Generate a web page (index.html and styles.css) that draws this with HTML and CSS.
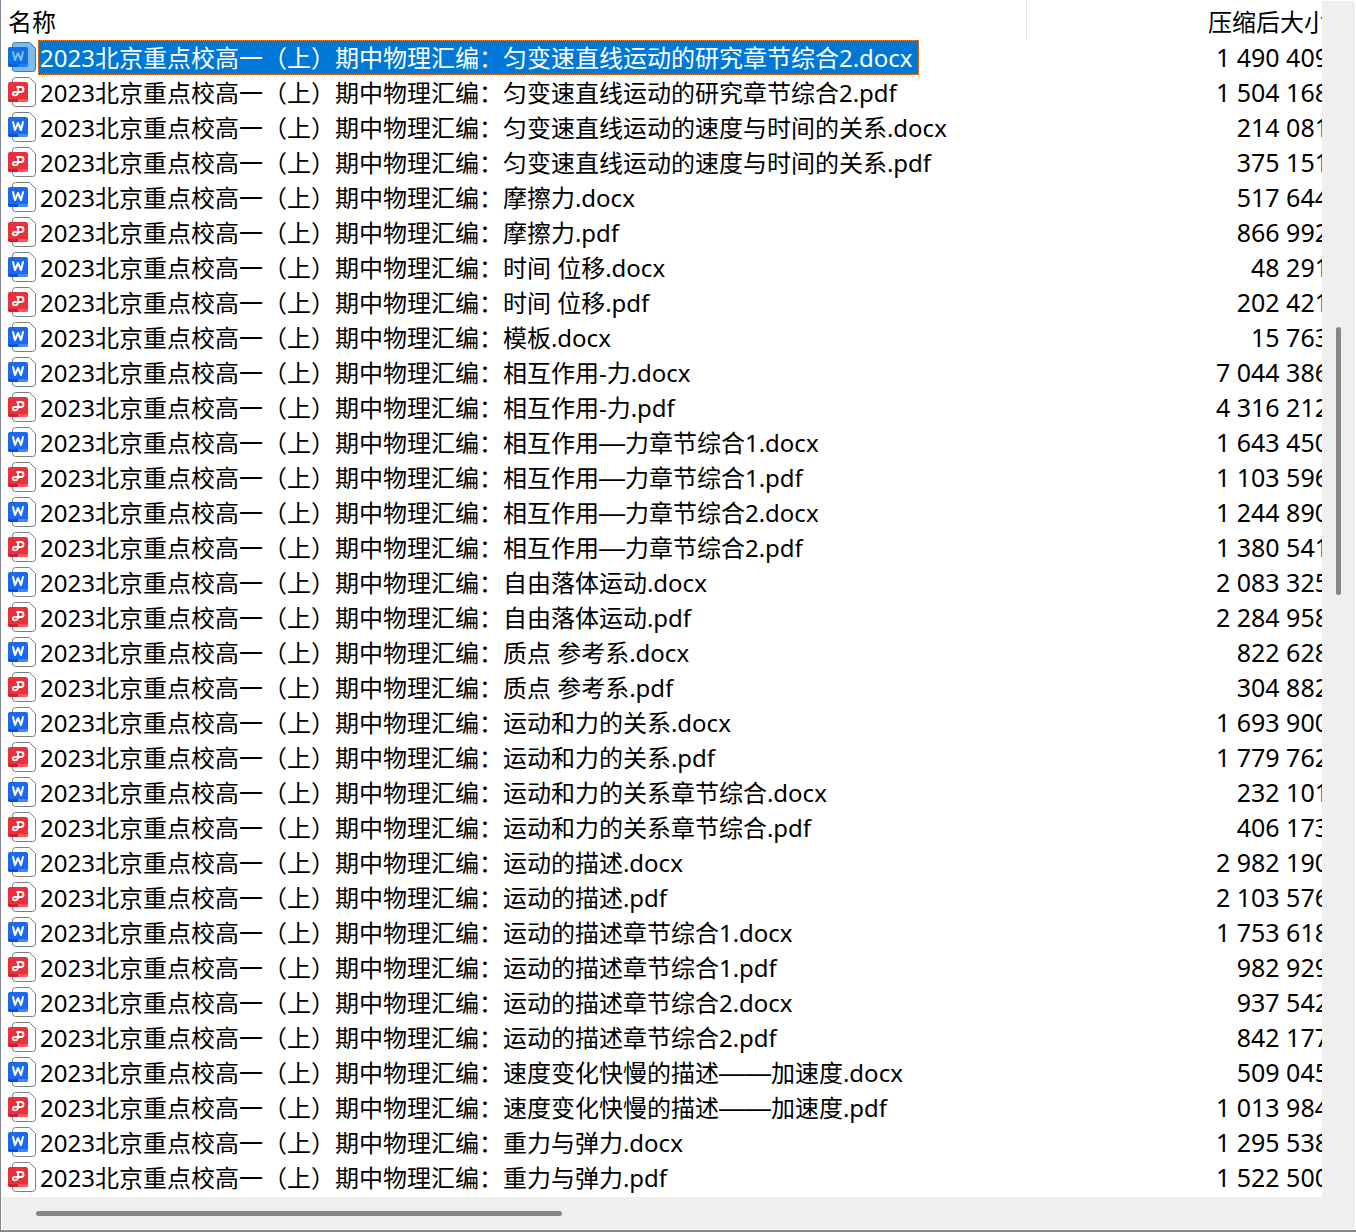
FILE: index.html
```html
<!DOCTYPE html>
<html lang="zh-CN">
<head>
    <meta charset="UTF-8">
    <meta name="viewport" content="width=device-width, initial-scale=1.0">
    <title>名称</title>
    <link rel="stylesheet" href="styles.css">
</head>
<body>
    <svg class="icon-defs" aria-hidden="true">
        <symbol id="icon-docx" viewBox="0 0 28 30">
            <path class="page" d="M4.5 3.5a3 3 0 0 1 3-3h14l6 6v20a3 3 0 0 1-3 3h-17a3 3 0 0 1-3-3z"/>
            <rect x="0" y="5" width="20" height="20" rx="2" fill="#1b69f2"/>
            <path d="M0 22h10v3H2a2 2 0 0 1-2-2z" fill="#0d50d6"/>
            <path d="M10 22h10v1a2 2 0 0 1-2 2h-8z" fill="#4288fb"/>
            <path d="M5 10l2 8 3-7 3 7 2-8" fill="none" stroke="#fff" stroke-width="2" stroke-linejoin="round" stroke-linecap="round"/>
        </symbol>
        <symbol id="icon-pdf" viewBox="0 0 28 30">
            <path class="page" d="M4.5 3.5a3 3 0 0 1 3-3h14l6 6v20a3 3 0 0 1-3 3h-17a3 3 0 0 1-3-3z"/>
            <rect x="0" y="5" width="20" height="20" rx="2" fill="#ec303b"/>
            <path d="M0 22h10v3H2a2 2 0 0 1-2-2z" fill="#cf202e"/>
            <path d="M10 22h10v1a2 2 0 0 1-2 2h-8z" fill="#fb5360"/>
            <path d="M9 10h4a2.5 2.5 0 0 1 0 5H6.500a1.700 1.700 0 1 0 0 3.400q3.500 0 3.500-3.400V10" fill="none" stroke="#fff" stroke-width="1.800" stroke-linecap="round"/>
        </symbol>
    </svg>

    <div class="viewer">
        <div class="list">
            <table class="files">
                <thead>
                    <tr>
                        <th class="col-name" scope="col">名称</th>
                        <th class="col-size" scope="col">压缩后大小</th>
                    </tr>
                </thead>
                <tbody id="fileRows"></tbody>
            </table>
        </div>
        <div class="scrollbar vertical"><div class="thumb"></div></div>
        <div class="scrollbar horizontal"><div class="thumb"></div></div>
    </div>

    <script src="script.js"></script>
</body>
</html>
```
FILE: styles.css
```css
:root {
    --border-color: #828790;
    --bar-color: #efefef;
    --thumb-color: #868686;
    --selected-color: #0078d7;
    --focus-color: #ff8728;
}

* {
    box-sizing: border-box;
    margin: 0;
    padding: 0;
}

body {
    background-color: white;
    color: black;
    font-family: 'Noto Sans', 'Noto Sans CJK SC', sans-serif;
    font-size: 24px;
    line-height: 33px;
}

.icon-defs {
    display: none;
}

.viewer {
    display: grid;
    grid-template-columns: minmax(0, 1fr) 33px;
    grid-template-rows: auto 32px;
    min-height: 100vh;
    border-left: 1px solid var(--border-color);
    border-bottom: 2px solid var(--border-color);
    padding: 0 1px 1px;
}

.list {
    overflow: hidden;
}

/* the table runs on under the vertical scrollbar */
.files {
    width: calc(100% + 11px);
    table-layout: fixed;
    border-collapse: collapse;
    white-space: nowrap;
}

th {
    height: 40px;
    padding-top: 2px;
    font-weight: 400;
}

td {
    height: 35px;
}

.col-name {
    width: 77%;
    padding-left: 6px;
    text-align: left;
    border-right: 1px solid #e5e5e5;
}

.col-size {
    padding-right: 5px;
    text-align: right;
}

.size {
    padding-right: 4px;
    font-size: 25px;
    text-align: right;
}

.file {
    display: flex;
    align-items: flex-start;
    gap: 2px;
    height: 35px;
    padding-left: 6px;
}

.name {
    padding: 0 5px 0 1px;
    border: 1px solid transparent;
}

/* double dashes have to join up */
.dash {
    font-family: 'Liberation Sans', sans-serif;
    font-size: 26px;
    line-height: 1;
}

.icon {
    flex: none;
    width: 28px;
    height: 30px;
    margin-top: 2px;
}

.page {
    fill: white;
    stroke: #7c7c7c;
}

.selected .name {
    color: white;
    background-color: var(--selected-color);
    border: 1px dotted var(--focus-color);
}

.tint {
    fill: var(--selected-color);
    opacity: 0.5;
}

.scrollbar {
    display: flex;
    background-color: var(--bar-color);
}

.scrollbar::before,
.scrollbar::after {
    content: "";
}

.thumb {
    border-radius: 3px;
    background-color: var(--thumb-color);
}

.vertical {
    flex-direction: column;
    align-items: center;
    margin-top: 1px;
}

.vertical::before {
    flex: 326;
}

.vertical .thumb {
    flex: 268;
    width: 5px;
}

.vertical::after {
    flex: 602;
}

.horizontal {
    grid-column: 1 / -1;
    align-items: center;
}

.horizontal::before {
    flex: 34;
}

.horizontal .thumb {
    flex: 526;
    height: 5px;
}

.horizontal::after {
    flex: 793;
}
```
FILE: script.js
```js
const prefix = '2023北京重点校高一（上）期中物理汇编：';

const files = [
    ['匀变速直线运动的研究章节综合2.docx', '1 490 409'],
    ['匀变速直线运动的研究章节综合2.pdf', '1 504 168'],
    ['匀变速直线运动的速度与时间的关系.docx', '214 081'],
    ['匀变速直线运动的速度与时间的关系.pdf', '375 151'],
    ['摩擦力.docx', '517 644'],
    ['摩擦力.pdf', '866 992'],
    ['时间 位移.docx', '48 291'],
    ['时间 位移.pdf', '202 421'],
    ['模板.docx', '15 763'],
    ['相互作用-力.docx', '7 044 386'],
    ['相互作用-力.pdf', '4 316 212'],
    ['相互作用—力章节综合1.docx', '1 643 450'],
    ['相互作用—力章节综合1.pdf', '1 103 596'],
    ['相互作用—力章节综合2.docx', '1 244 890'],
    ['相互作用—力章节综合2.pdf', '1 380 541'],
    ['自由落体运动.docx', '2 083 325'],
    ['自由落体运动.pdf', '2 284 958'],
    ['质点 参考系.docx', '822 628'],
    ['质点 参考系.pdf', '304 882'],
    ['运动和力的关系.docx', '1 693 900'],
    ['运动和力的关系.pdf', '1 779 762'],
    ['运动和力的关系章节综合.docx', '232 101'],
    ['运动和力的关系章节综合.pdf', '406 173'],
    ['运动的描述.docx', '2 982 190'],
    ['运动的描述.pdf', '2 103 576'],
    ['运动的描述章节综合1.docx', '1 753 618'],
    ['运动的描述章节综合1.pdf', '982 929'],
    ['运动的描述章节综合2.docx', '937 542'],
    ['运动的描述章节综合2.pdf', '842 177'],
    ['速度变化快慢的描述——加速度.docx', '509 045'],
    ['速度变化快慢的描述——加速度.pdf', '1 013 984'],
    ['重力与弹力.docx', '1 295 538'],
    ['重力与弹力.pdf', '1 522 500']
];

const selectedIndex = 0;

document.getElementById('fileRows').innerHTML = files.map(function([name, size], index) {
    const type = name.split('.').pop();
    const label = name.replace(/—+/, '<span class="dash">$&</span>');
    const selected = index === selectedIndex;
    const tint = selected
        ? '<path class="tint" d="M4 5V3.5a3.5 3.5 0 0 1 3.5-3.5h14.5l6 6v20.5a3.5 3.5 0 0 1-3.5 3.5h-17a3.5 3.5 0 0 1-3.5-3.5V25H2a2 2 0 0 1-2-2V7a2 2 0 0 1 2-2z"/>'
        : '';

    return `
        <tr class="${selected ? 'selected' : ''}">
            <td>
                <div class="file">
                    <svg class="icon" viewBox="0 0 28 30" aria-hidden="true"><use href="#icon-${type}"/>${tint}</svg>
                    <span class="name">${prefix}${label}</span>
                </div>
            </td>
            <td class="size">${size}</td>
        </tr>`;
}).join('');
```
